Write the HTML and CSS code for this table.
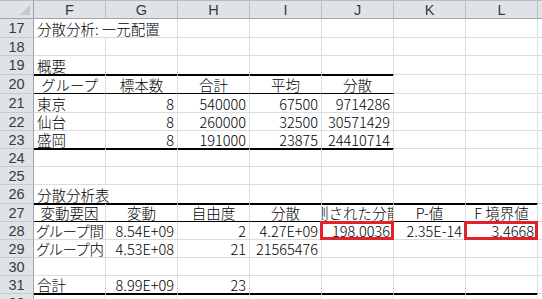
FILE: index.html
```html
<!DOCTYPE html>
<html lang="ja">
<head>
<meta charset="utf-8">
<title>分散分析</title>
<link rel="stylesheet" href="styles.css">
</head>
<body>
<div class="sheet">
  <div class="row hdr">
    <div class="rh corner"><svg class="tri" width="10" height="10" viewBox="0 0 10 10"><polygon points="10,0 10,10 0,10" fill="#c3c8ce"/></svg></div>
    <div class="ch">F</div><div class="ch">G</div><div class="ch">H</div><div class="ch">I</div><div class="ch">J</div><div class="ch">K</div><div class="ch">L</div><div class="ch last"></div>
  </div>

  <div class="row h19">
    <div class="rh">17</div>
    <div class="c span2">分散分析: 一元配置</div><div class="c"></div><div class="c"></div><div class="c"></div><div class="c"></div><div class="c"></div><div class="c"></div>
  </div>
  <div class="row h18">
    <div class="rh">18</div>
    <div class="c"></div><div class="c"></div><div class="c"></div><div class="c"></div><div class="c"></div><div class="c"></div><div class="c"></div><div class="c"></div>
  </div>
  <div class="row h19">
    <div class="rh">19</div>
    <div class="c bb">概要</div><div class="c bb"></div><div class="c bb"></div><div class="c bb"></div><div class="c bb"></div><div class="c"></div><div class="c"></div><div class="c"></div>
  </div>
  <div class="row h19">
    <div class="rh">20</div>
    <div class="c m bt bb">グループ</div><div class="c m bt bb">標本数</div><div class="c m bt bb">合計</div><div class="c m bt bb">平均</div><div class="c m bt bb">分散</div><div class="c"></div><div class="c"></div><div class="c"></div>
  </div>
  <div class="row h19">
    <div class="rh">21</div>
    <div class="c">東京</div><div class="c r">8</div><div class="c r">540000</div><div class="c r">67500</div><div class="c r">9714286</div><div class="c"></div><div class="c"></div><div class="c"></div>
  </div>
  <div class="row h18">
    <div class="rh">22</div>
    <div class="c">仙台</div><div class="c r">8</div><div class="c r">260000</div><div class="c r">32500</div><div class="c r">30571429</div><div class="c"></div><div class="c"></div><div class="c"></div>
  </div>
  <div class="row h18">
    <div class="rh">23</div>
    <div class="c bb">盛岡</div><div class="c r bb">8</div><div class="c r bb">191000</div><div class="c r bb">23875</div><div class="c r bb">24410714</div><div class="c"></div><div class="c"></div><div class="c"></div>
  </div>
  <div class="row h18">
    <div class="rh">24</div>
    <div class="c bt"></div><div class="c bt"></div><div class="c bt"></div><div class="c bt"></div><div class="c bt"></div><div class="c"></div><div class="c"></div><div class="c"></div>
  </div>
  <div class="row h18">
    <div class="rh">25</div>
    <div class="c"></div><div class="c"></div><div class="c"></div><div class="c"></div><div class="c"></div><div class="c"></div><div class="c"></div><div class="c"></div>
  </div>
  <div class="row h19">
    <div class="rh">26</div>
    <div class="c bb span2">分散分析表</div><div class="c bb"></div><div class="c bb"></div><div class="c bb"></div><div class="c bb"></div><div class="c bb"></div><div class="c"></div>
  </div>
  <div class="row h18">
    <div class="rh">27</div>
    <div class="c m bt bb">変動要因</div><div class="c m bt bb">変動</div><div class="c m bt bb">自由度</div><div class="c m bt bb">分散</div><div class="c m bt bb">観測された分散比</div><div class="c m bt bb">P-値</div><div class="c m bt bb">F 境界値</div><div class="c"></div>
  </div>
  <div class="row h18">
    <div class="rh">28</div>
    <div class="c pt">グループ間</div><div class="c r">8.54E+09</div><div class="c r">2</div><div class="c r">4.27E+09</div><div class="c r hl">198.0036</div><div class="c r">2.35E-14</div><div class="c r hl">3.4668</div><div class="c"></div>
  </div>
  <div class="row h18">
    <div class="rh">29</div>
    <div class="c pt">グループ内</div><div class="c r">4.53E+08</div><div class="c r">21</div><div class="c r">21565476</div><div class="c"></div><div class="c"></div><div class="c"></div><div class="c"></div>
  </div>
  <div class="row h18">
    <div class="rh">30</div>
    <div class="c"></div><div class="c"></div><div class="c"></div><div class="c"></div><div class="c"></div><div class="c"></div><div class="c"></div><div class="c"></div>
  </div>
  <div class="row h18">
    <div class="rh">31</div>
    <div class="c bb">合計</div><div class="c r bb">8.99E+09</div><div class="c r bb">23</div><div class="c bb"></div><div class="c bb"></div><div class="c bb"></div><div class="c bb"></div><div class="c"></div>
  </div>
  <div class="row h18">
    <div class="rh">32</div>
    <div class="c bt"></div><div class="c bt"></div><div class="c bt"></div><div class="c bt"></div><div class="c bt"></div><div class="c bt"></div><div class="c bt"></div><div class="c"></div>
  </div>
</div>
</body>
</html>
```

FILE: styles.css
```css
html, body {
  margin: 0;
  padding: 0;
  background: #ffffff;
  overflow: hidden;
}

.sheet {
  width: 542px;
  height: 299px;
  overflow: hidden;
  font-family: "Noto Sans CJK JP", "Noto Sans", sans-serif;
  font-size: 14.5px;
  font-weight: 300;
  color: #000;
}

.row {
  display: grid;
  grid-template-columns: 34px repeat(7, 72px) 1fr;
  box-sizing: border-box;
}

.hdr { height: 19px; background: #dfe3e8; }
.h19 { height: 19px; }
.h18 { height: 18px; }

.rh {
  box-sizing: border-box;
  background: #dfe3e8;
  border-right: 1px solid #9da4ad;
  border-bottom: 1px solid #c5cad0;
  color: #3a3a3a;
  display: flex;
  align-items: center;
  justify-content: center;
  font-family: "Liberation Sans", "Noto Sans", sans-serif;
  font-weight: 400;
  font-size: 14.5px;
  line-height: 1;
  padding-top: 1px;
}

.corner {
  position: relative;
  border-bottom: 1px solid #9da4ad;
  border-top: 1px solid #b7bdc4;
}
.tri {
  position: absolute;
  right: 3px;
  bottom: 3px;
}

.ch {
  box-sizing: border-box;
  border-right: 1px solid #b7bdc4;
  border-bottom: 1px solid #9da4ad;
  border-top: 1px solid #b7bdc4;
  color: #3a3a3a;
  display: flex;
  align-items: center;
  justify-content: center;
  font-family: "Liberation Sans", "Noto Sans", sans-serif;
  font-weight: 400;
  font-size: 14.5px;
  line-height: 1;
  padding-top: 1px;
}
.ch.last { border-right: none; }

.c {
  box-sizing: border-box;
  border-right: 1px solid #dadcdd;
  border-bottom: 1px solid #dadcdd;
  padding: 0 3px 0 3px;
  display: flex;
  align-items: flex-end;
  justify-content: flex-start;
  white-space: nowrap;
  overflow: hidden;
  line-height: 17px;
}
.c.r { justify-content: flex-end; }
.c.m { justify-content: center; }
.c.pt {
  font-feature-settings: "palt" 1;
  padding-left: 2px;
}
.span2 { grid-column: span 2; }

.c.bb { border-bottom-color: #000; }
.c.bt { box-shadow: inset 0 1px 0 #000; }

.c.hl {
  position: relative;
  overflow: visible;
}
.c.hl::after {
  content: "";
  position: absolute;
  left: -2px;
  top: -1px;
  right: -1px;
  bottom: -1px;
  border: 3px solid #e5202b;
  pointer-events: none;
}
```
